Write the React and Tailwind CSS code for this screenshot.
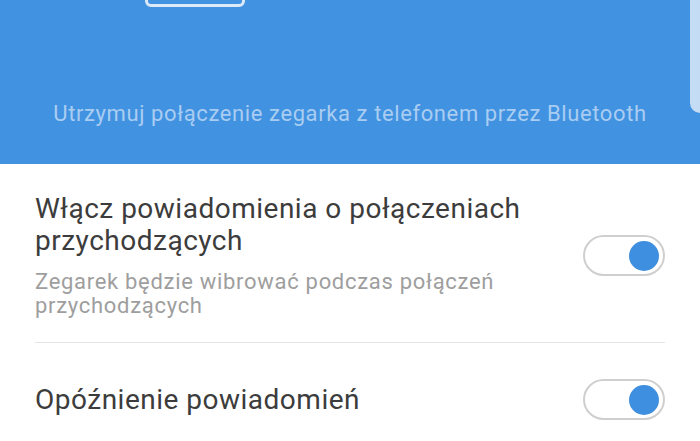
import React from 'react';

function Toggle() {
    return (
        <div className="w-[82px] h-[41px] rounded-full border-2 border-[#cfcfcf] bg-white flex items-center justify-end pr-[4px] shrink-0">
            <div className="w-[30px] h-[30px] rounded-full bg-[#3f8fe0]" />
        </div>
    );
}

export default function App() {
    return (
        <div className="w-[700px] h-[441px] overflow-hidden bg-white" style={{ fontFamily: 'Roboto, "Noto Sans", sans-serif' }}>
            {/* Header */}
            <header className="relative h-[164px] bg-[#4192e0] flex items-end justify-center pb-[39px]">
                {/* watch illustration, bottom edge */}
                <div className="absolute left-[145px] top-[-20px] w-[100px] h-[27px] rounded-[6px] border-[3px] border-[#dce9f8]" />
                {/* phone illustration, left edge */}
                <div className="absolute left-[690px] top-[-20px] w-[40px] h-[133px] rounded-bl-[10px] bg-[#c5dcf5]" />
                <p className="text-[22px] leading-none text-[#a9cdf2] tracking-[0.6px]">
                    Utrzymuj połączenie zegarka z telefonem przez Bluetooth
                </p>
            </header>

            {/* Settings */}
            <main className="px-[35px]">
                <div className="flex items-center justify-between pt-[29px] pb-[24px] border-b border-[#e5e5e5]">
                    <div className="flex flex-col">
                        <h2 className="text-[28px] leading-[32px] text-[#3c3c3c] tracking-[0.5px]">
                            Włącz powiadomienia o połączeniach<br />przychodzących
                        </h2>
                        <p className="text-[22px] leading-[24px] text-[#9e9e9e] tracking-[0.7px] mt-[13px]">
                            Zegarek będzie wibrować podczas połączeń<br />przychodzących
                        </p>
                    </div>
                    <Toggle />
                </div>
                <div className="flex items-center justify-between pt-[36px]">
                    <h2 className="text-[28px] leading-[32px] text-[#3c3c3c] tracking-[0.5px]">
                        Opóźnienie powiadomień
                    </h2>
                    <Toggle />
                </div>
            </main>
        </div>
    );
}
